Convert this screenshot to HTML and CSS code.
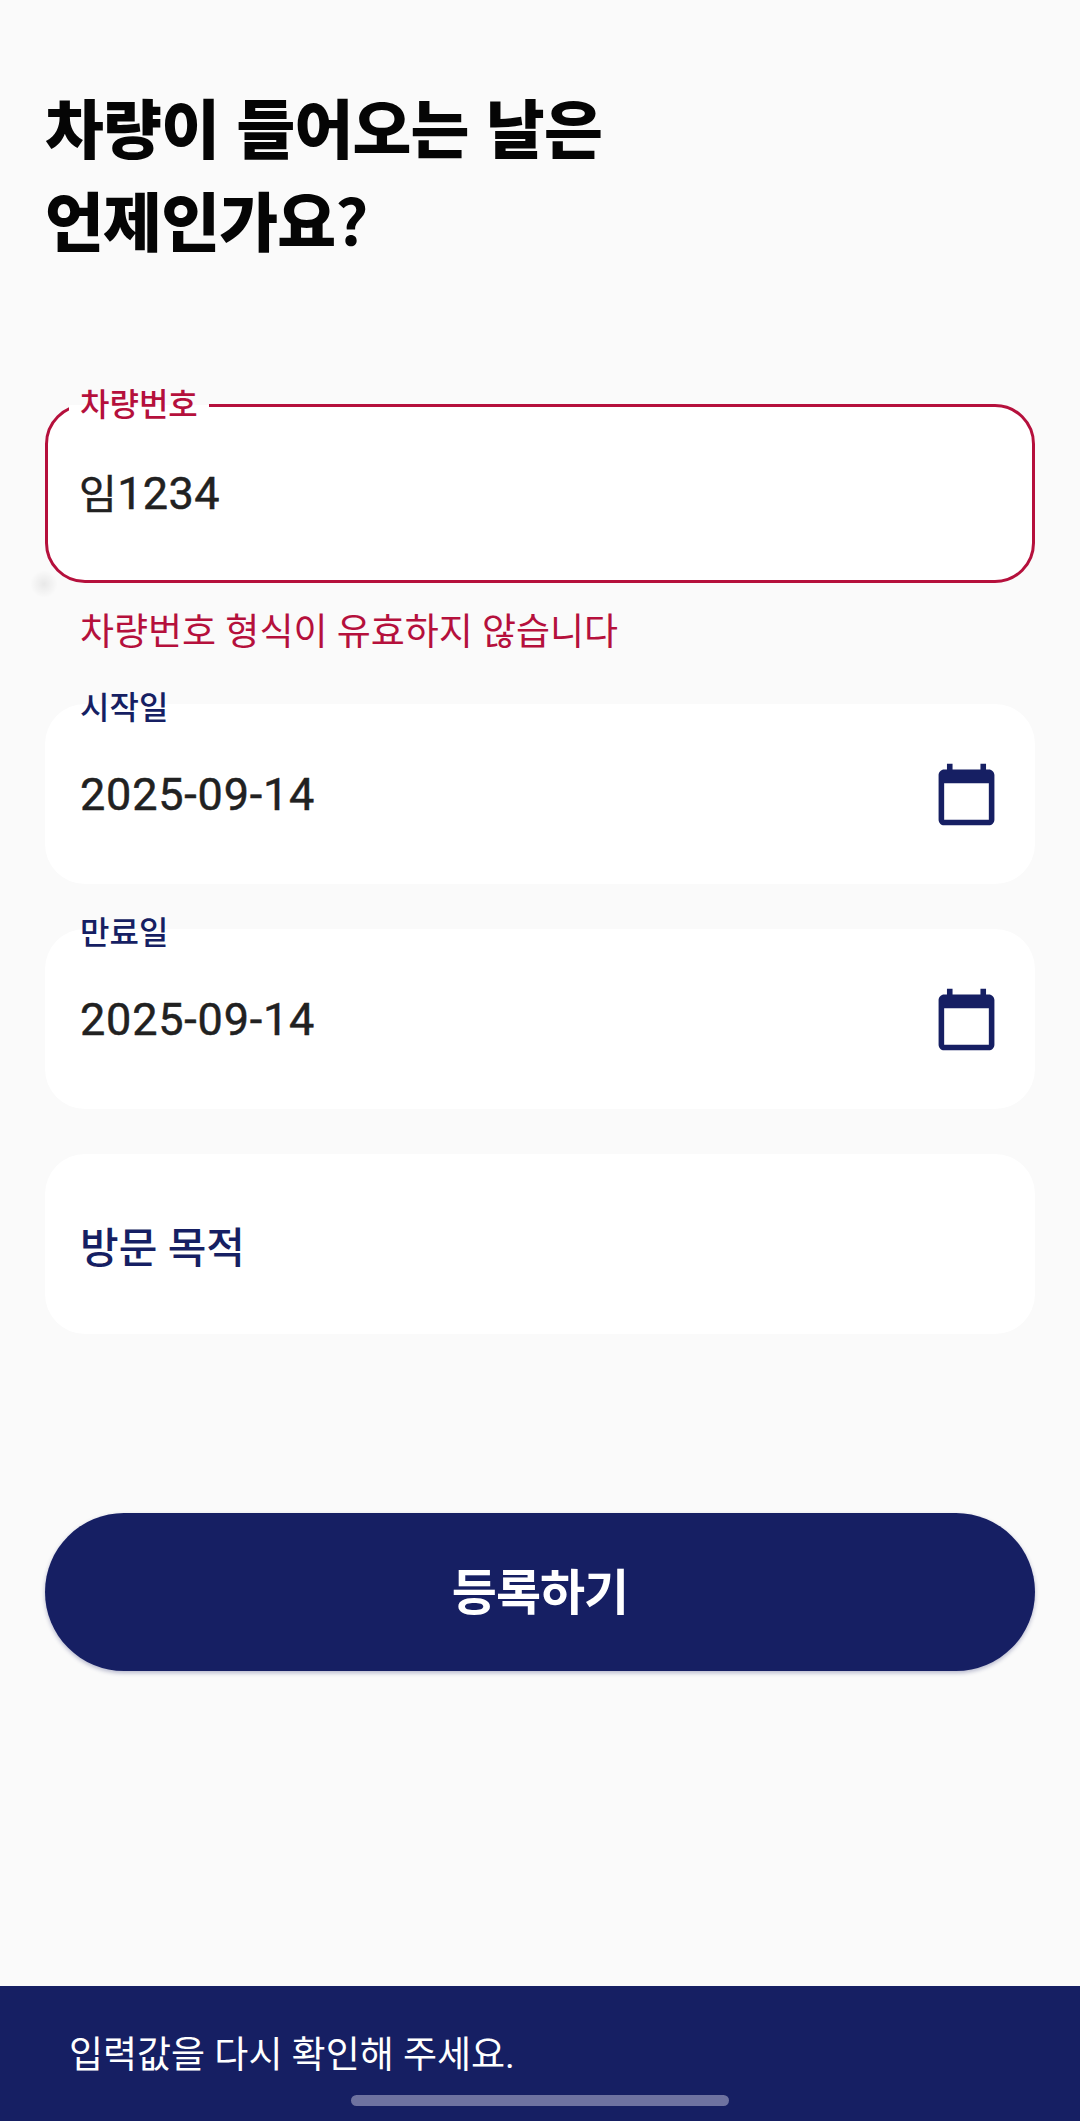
FILE: index.html
```html
<!DOCTYPE html>
<html lang="ko">
<head>
  <meta charset="UTF-8">
  <meta name="viewport" content="width=device-width, initial-scale=1.0">
  <title>차량 등록</title>
  <link rel="stylesheet" href="styles.css">
</head>
<body>
  <main class="page">
    <h1 class="title">차량이 들어오는 날은<br>언제인가요<span class="title-mark">?</span></h1>

    <form class="form">
      <div class="field field-error">
        <span class="field-label">차량번호</span>
        <span class="field-value"><span class="hangul">임</span>1234</span>
      </div>
      <p class="error-text">차량번호 형식이 유효하지 않습니다</p>

      <div class="field field-date">
        <span class="field-label">시작일</span>
        <span class="field-value">2025-09-14</span>
        <svg class="calendar" viewBox="0 0 24 24" aria-hidden="true">
          <path d="M20 3h-1V1h-2v2H7V1H5v2H4c-1.1 0-2 .9-2 2v16c0 1.1.9 2 2 2h16c1.1 0 2-.9 2-2V5c0-1.1-.9-2-2-2zm0 18H4V8h16v13z"/>
        </svg>
      </div>

      <div class="field field-date">
        <span class="field-label">만료일</span>
        <span class="field-value">2025-09-14</span>
        <svg class="calendar" viewBox="0 0 24 24" aria-hidden="true">
          <path d="M20 3h-1V1h-2v2H7V1H5v2H4c-1.1 0-2 .9-2 2v16c0 1.1.9 2 2 2h16c1.1 0 2-.9 2-2V5c0-1.1-.9-2-2-2zm0 18H4V8h16v13z"/>
        </svg>
      </div>

      <div class="field">
        <span class="field-placeholder">방문 목적</span>
      </div>

      <button type="button" class="submit">등록하기</button>
    </form>

    <div class="snackbar">
      <span class="snackbar-text">입력값을 다시 확인해 주세요.</span>
      <span class="home-bar"></span>
    </div>
  </main>
</body>
</html>
```

FILE: styles.css
```css
* {
  box-sizing: border-box;
}
body {
  margin: 0;
  background-color: #fafafa;
  font-family: Roboto, "Noto Sans CJK KR", sans-serif;
}
.page {
  display: flex;
  flex-direction: column;
  height: 2121px;
  padding-top: 79px;
}
.title {
  margin: 0;
  padding: 0 45px;
  font-family: "Noto Sans CJK KR", sans-serif;
  font-size: 64px;
  font-weight: 900;
  line-height: 93px;
  letter-spacing: -0.8px;
  color: #050505;
}
.title-mark {
  font-weight: 700;
}
.form {
  display: flex;
  flex-direction: column;
  padding: 0 45px;
  margin-top: 139px;
}
.field {
  position: relative;
  display: flex;
  align-items: center;
  justify-content: space-between;
  height: 180px;
  padding: 0 35px;
  margin-bottom: 45px;
  background-color: #fff;
  border-radius: 40px;
}
.field-label {
  position: absolute;
  left: 35px;
  top: -16px;
  font-size: 32px;
  font-weight: 500;
  line-height: 40px;
  color: #161f63;
}
.field-value {
  font-size: 45px;
  font-weight: 400;
  letter-spacing: 0.8px;
  -webkit-text-stroke: 0.5px #212121;
  color: #212121;
}
.hangul {
  font-size: 41px;
}
.field-placeholder {
  font-size: 42px;
  font-weight: 500;
  color: #161f63;
}
.field-error {
  height: 179px;
  padding-bottom: 6px;
  margin-bottom: 0;
  border: 3px solid #b5103c;
}
.field-error::after {
  content: "";
  position: absolute;
  left: -18px;
  bottom: -18px;
  width: 28px;
  height: 28px;
  border-radius: 50%;
  background: radial-gradient(circle, rgba(0, 0, 0, 0.07), rgba(0, 0, 0, 0) 70%);
}
.field-error .field-label {
  left: 21px;
  top: -22px;
  padding: 0 11px;
  color: #b5103c;
  background: linear-gradient(#fafafa 50%, #fff 50%);
}
.field-error .field-value {
  margin-left: -4px;
  letter-spacing: 0.4px;
}
.error-text {
  margin: 25px 0 46px 35px;
  font-size: 37px;
  line-height: 50px;
  color: #b5103c;
}
.calendar {
  width: 67px;
  height: 67px;
  fill: #161f63;
}
.submit {
  height: 158px;
  margin-top: 134px;
  padding-bottom: 8px;
  border: none;
  border-radius: 79px;
  background-color: #161f63;
  color: #fff;
  font-family: inherit;
  font-size: 49px;
  font-weight: 700;
  letter-spacing: -1px;
  box-shadow: 0 2px 4px rgba(22, 31, 99, 0.3);
}
.snackbar {
  position: relative;
  display: flex;
  margin-top: auto;
  height: 135px;
  padding: 45px 0 0 69px;
  background-color: #161f63;
}
.snackbar-text {
  font-size: 37px;
  line-height: 50px;
  color: #fff;
}
.home-bar {
  position: absolute;
  left: 351px;
  bottom: 15px;
  width: 378px;
  height: 11px;
  border-radius: 6px;
  background-color: #6e72a0;
}
```
